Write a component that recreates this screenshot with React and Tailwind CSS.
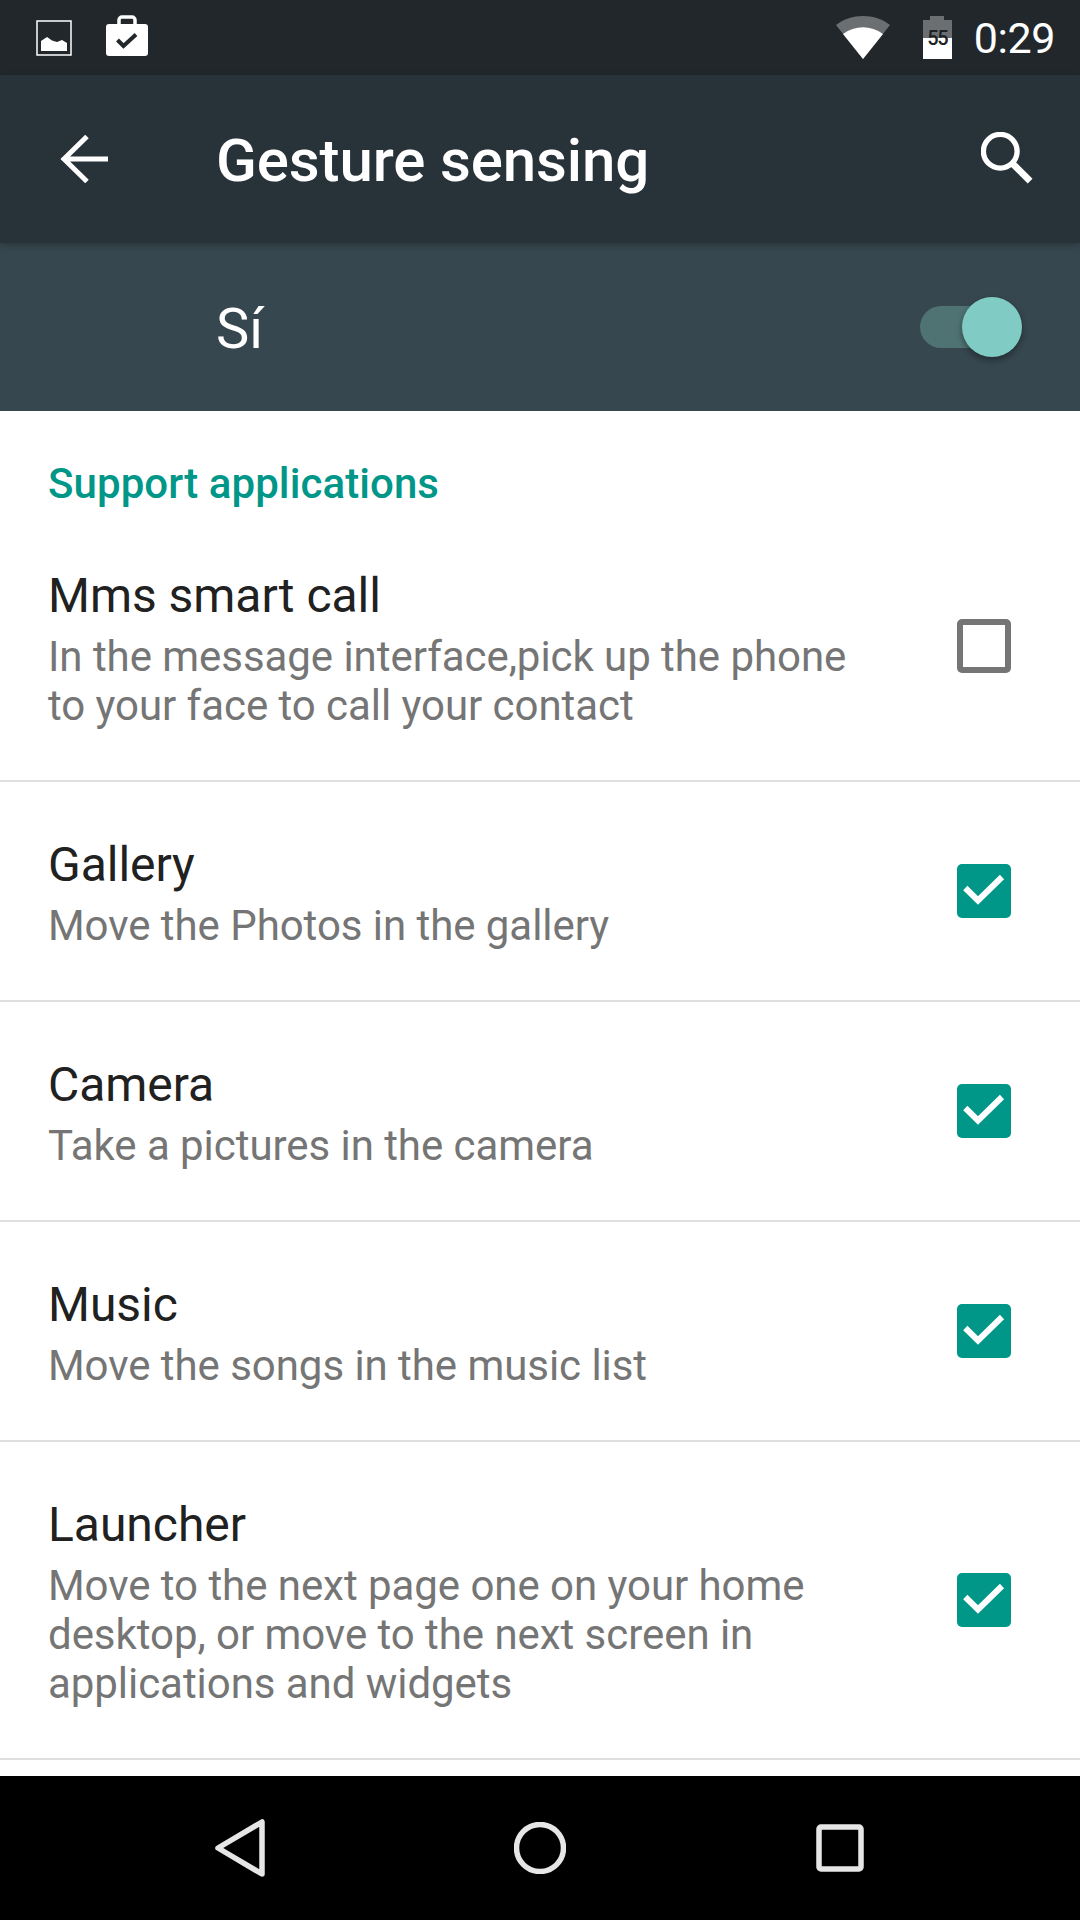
import React from 'react';

const rows = [
  { title: 'Mms smart call', sub: ['In the message interface,pick up the phone', 'to your face to call your contact'], on: false, h: 'h-[270px]' },
  { title: 'Gallery', sub: ['Move the Photos in the gallery'], on: true, h: 'h-[220px]' },
  { title: 'Camera', sub: ['Take a pictures in the camera'], on: true, h: 'h-[220px]' },
  { title: 'Music', sub: ['Move the songs in the music list'], on: true, h: 'h-[220px]' },
  { title: 'Launcher', sub: ['Move to the next page one on your home', 'desktop, or move to the next screen in', 'applications and widgets'], on: true, h: 'h-[318px]' },
];

function Check({ on }) {
  if (!on) {
    return <div className="w-[54px] h-[54px] rounded-[5px] border-[6px] border-[#757575]" />;
  }
  return (
    <div className="w-[54px] h-[54px] rounded-[5px] bg-[#009688]">
      <svg viewBox="0 0 54 54" className="w-[54px] h-[54px]">
        <path d="M8.3 24 L21 36.5 L45 13" fill="none" stroke="#fff" strokeWidth="6" />
      </svg>
    </div>
  );
}

function Row({ title, sub, on, h }) {
  return (
    <div className={`${h} flex items-center justify-between pl-[48px] pr-[69px] border-b-[2px] border-[#e0e0e0]`}>
      <div className="pt-[3px]">
        <div className="text-[48px] leading-[60px] tracking-[-0.03px] text-[#212121] mb-[6px]">{title}</div>
        {sub.map((line) => (
          <div key={line} className="text-[42px] leading-[49px] tracking-[-0.05px] text-[#757575]">{line}</div>
        ))}
      </div>
      <Check on={on} />
    </div>
  );
}

export default function App() {
  return (
    <div className="w-[1080px] h-[1920px] flex flex-col bg-white overflow-hidden font-['Roboto',sans-serif]">
      {/* status bar */}
      <div className="h-[75px] bg-[#21272b] flex items-center pl-[36px] pr-[25px] shrink-0">
        <svg viewBox="0 0 36 36" className="w-[36px] h-[36px]">
          <rect x="1" y="1" width="34" height="34" fill="none" stroke="#fff" strokeWidth="1.5" />
          <path d="M5 31 V21 L11 17 L16 20.5 L21 22 L26 20 L31 23 V31 Z" fill="#fff" />
        </svg>
        <svg viewBox="0 0 44 42" className="w-[44px] h-[42px] ml-[33px] -mt-[3px]">
          <path d="M14 9 V5 a3 3 0 0 1 3-3 h10 a3 3 0 0 1 3 3 V9" fill="none" stroke="#fff" strokeWidth="3.5" />
          <rect x="1" y="9" width="42" height="32" rx="3" fill="#fff" />
          <path d="M12.5 25 L18.5 31 L31 19.5" fill="none" stroke="#21272b" strokeWidth="4" />
        </svg>
        <div className="flex-1" />
        <svg viewBox="0 0 54 44" className="w-[54px] h-[44px] mr-[33px]">
          <path d="M27 43 L0 9 C15 -3 39 -3 54 9 Z" fill="#6b6f71" />
          <path d="M27 43 L7 18 C19 9 35 9 47 18 Z" fill="#fff" />
        </svg>
        <div className="relative w-[29px] h-[43px] mr-[22px]">
          <div className="absolute left-[7px] top-0 w-[14px] h-[5px] bg-[#6b6f71]" />
          <div className="absolute left-0 top-[4px] w-[29px] h-[18px] bg-[#6b6f71]" />
          <div className="absolute left-0 top-[22px] w-[29px] h-[21px] bg-white" />
          <div className="absolute inset-x-0 top-[11px] text-center text-[20px] leading-[22px] tracking-[-1.5px] font-medium text-[#1c2124]">55</div>
        </div>
        <div className="text-[43px] leading-[50px] tracking-[-0.4px] mt-[1px] text-white">0:29</div>
      </div>

      {/* toolbar */}
      <div className="h-[168px] bg-[#283339] flex items-center shrink-0 pl-[60px] pr-[47px] shadow-[0_2px_6px_rgba(0,0,0,0.25)] z-10">
        <svg viewBox="0 0 48 48" className="w-[48px] h-[48px]">
          <path d="M48 24 H4 M27 1.5 L4 24 L27 46.5" fill="none" stroke="#fff" strokeWidth="5" />
        </svg>
        <div className="ml-[108px] mt-[3px] flex-1 text-[60px] leading-[72px] tracking-[-0.12px] font-medium text-white">Gesture sensing</div>
        <svg viewBox="0 0 54 54" className="w-[52px] h-[52px] -mt-[2px]">
          <circle cx="20" cy="20" r="17.5" fill="none" stroke="#fff" strokeWidth="5.5" />
          <path d="M33 33 L51 51" stroke="#fff" strokeWidth="7" />
        </svg>
      </div>

      {/* master switch */}
      <div className="h-[168px] bg-[#37474f] flex items-center justify-between shrink-0 pl-[216px] pr-[58px]">
        <div className="text-[56px] leading-[60px] mt-[3px] text-white">Sí</div>
        <div className="relative w-[102px] h-[60px]">
          <div className="absolute left-0 top-[9px] w-[84px] h-[42px] rounded-full bg-[#4f7373]" />
          <div className="absolute right-0 top-0 w-[60px] h-[60px] rounded-full bg-[#80cbc4] shadow-[0_3px_6px_rgba(0,0,0,0.4)]" />
        </div>
      </div>

      {/* list */}
      <div className="flex-1 min-h-0">
        <div className="h-[101px] flex items-end pl-[48px] pb-[3px] text-[42px] leading-[50px] tracking-[0.08px] font-medium text-[#009688]">Support applications</div>
        {rows.map((r) => (
          <Row key={r.title} {...r} />
        ))}
      </div>

      {/* nav bar */}
      <div className="h-[144px] bg-black flex items-center shrink-0 pl-[214px] pr-[216px] justify-between">
        <svg viewBox="0 0 52 60" className="w-[52px] h-[60px]">
          <path d="M48 4 V56 L4 30 Z" fill="none" stroke="#e6e6e6" strokeWidth="5.5" strokeLinejoin="round" />
        </svg>
        <svg viewBox="0 0 52 52" className="w-[52px] h-[52px] -ml-[2px]">
          <circle cx="26" cy="26" r="23.5" fill="none" stroke="#e6e6e6" strokeWidth="5.5" />
        </svg>
        <svg viewBox="0 0 48 48" className="w-[48px] h-[48px]">
          <rect x="3" y="3" width="42" height="42" rx="2" fill="none" stroke="#e6e6e6" strokeWidth="5.5" />
        </svg>
      </div>
    </div>
  );
}
